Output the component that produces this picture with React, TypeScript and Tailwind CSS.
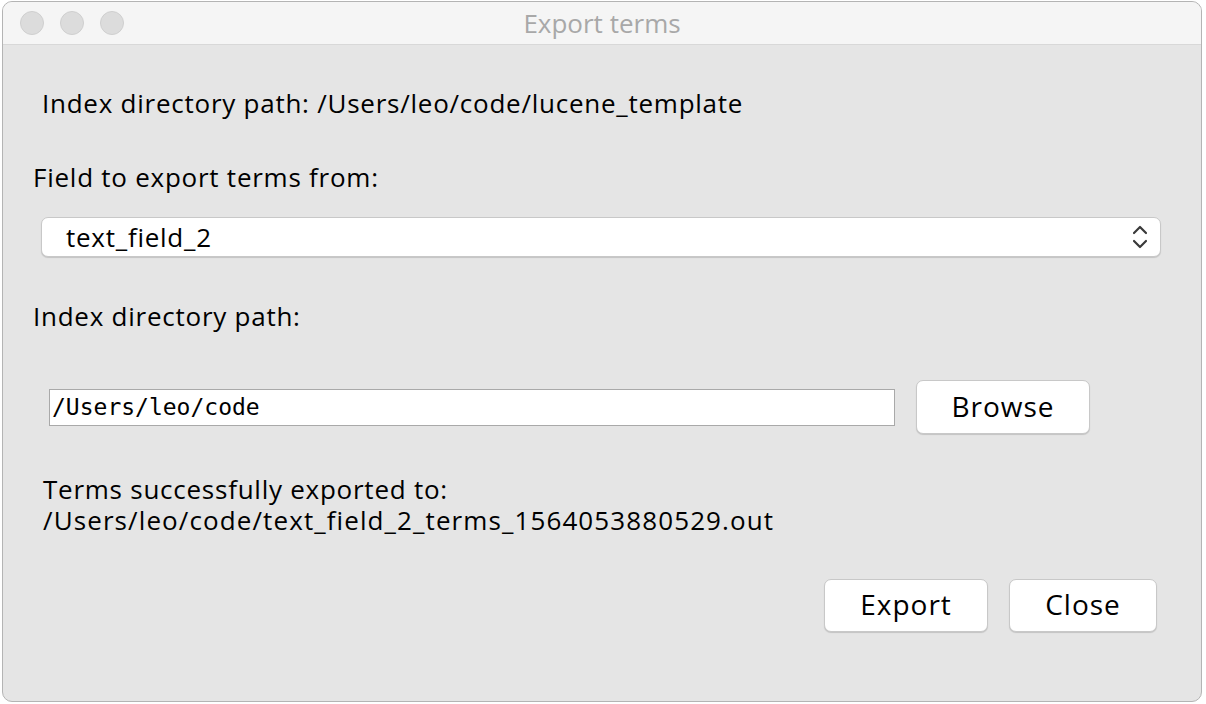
import React from "react";

function Chevrons() {
  return (
    <svg width="16" height="26" viewBox="0 0 16 26" fill="none" stroke="#3a3a3a" strokeWidth="2.2" strokeLinecap="round" strokeLinejoin="round">
      <path d="M2 9 L8 3 L14 9" />
      <path d="M2 17 L8 23 L14 17" />
    </svg>
  );
}

const btn =
  "bg-white rounded-[7px] border border-[#c8c8c8] shadow-[0_1px_1px_rgba(0,0,0,0.15)] flex items-center justify-center pb-[3px] text-[28px] tracking-[1px]";

export default function App() {
  const sans = { fontFamily: '"Open Sans", "Noto Sans", sans-serif' };
  return (
    <div className="w-[1206px] h-[704px] bg-white overflow-hidden" style={sans}>
      <div className="ml-[2px] mt-[1px] w-[1200px] h-[701px] rounded-[10px] border border-[#b4b4b4] bg-[#e5e5e5] overflow-hidden flex flex-col">
        <div className="h-[43px] shrink-0 bg-[#f5f5f5] border-b border-[#d8d8d8] flex items-center relative">
          <div className="flex gap-[16px] pl-[17px]">
            <div className="w-[24px] h-[24px] rounded-full bg-[#dcdcdc] border border-[#cfcfcf]" />
            <div className="w-[24px] h-[24px] rounded-full bg-[#dcdcdc] border border-[#cfcfcf]" />
            <div className="w-[24px] h-[24px] rounded-full bg-[#dcdcdc] border border-[#cfcfcf]" />
          </div>
          <div className="absolute inset-0 flex items-center justify-center pt-[1px] text-[26px] text-[#a8a8a8] pointer-events-none">
            Export terms
          </div>
        </div>
        <div className="flex-1 flex flex-col text-[26px] tracking-[0.75px] text-black leading-none">
          <div className="h-[36px] mt-[40px] pl-[39px] flex items-center">
            Index directory path: /Users/leo/code/lucene_template
          </div>
          <div className="h-[36px] mt-[38px] pl-[30px] flex items-center">Field to export terms from:</div>
          <div className="pl-[38px] pr-[40px] mt-[22px]">
            <div className="h-[40px] bg-white rounded-[7px] border border-[#c8c8c8] shadow-[0_1px_1px_rgba(0,0,0,0.15)] flex items-center justify-between pl-[24px] pr-[12px]">
              <span>text_field_2</span>
              <Chevrons />
            </div>
          </div>
          <div className="h-[36px] mt-[41px] pl-[30px] flex items-center">Index directory path:</div>
          <div className="flex items-center pl-[46px] mt-[46px] h-[54px]">
            <div
              className="w-[846px] h-[37px] bg-white border border-[#a9a9a9] flex items-center pl-[2px] text-[23px] tracking-normal"
              style={{ fontFamily: '"DejaVu Sans Mono", monospace' }}
            >
              /Users/leo/code
            </div>
            <div className={"ml-[21px] w-[174px] h-[54px] " + btn}>Browse</div>
          </div>
          <div className="pl-[40px] mt-[39px] flex flex-col">
            <div className="h-[31px] flex items-center">Terms successfully exported to:</div>
            <div className="h-[31px] flex items-center tracking-[1.1px]">/Users/leo/code/text_field_2_terms_1564053880529.out</div>
          </div>
          <div className="flex justify-end pr-[44px] mt-[44px] gap-[21px]">
            <div className={"w-[164px] h-[53px] " + btn}>Export</div>
            <div className={"w-[148px] h-[53px] " + btn}>Close</div>
          </div>
        </div>
      </div>
    </div>
  );
}
